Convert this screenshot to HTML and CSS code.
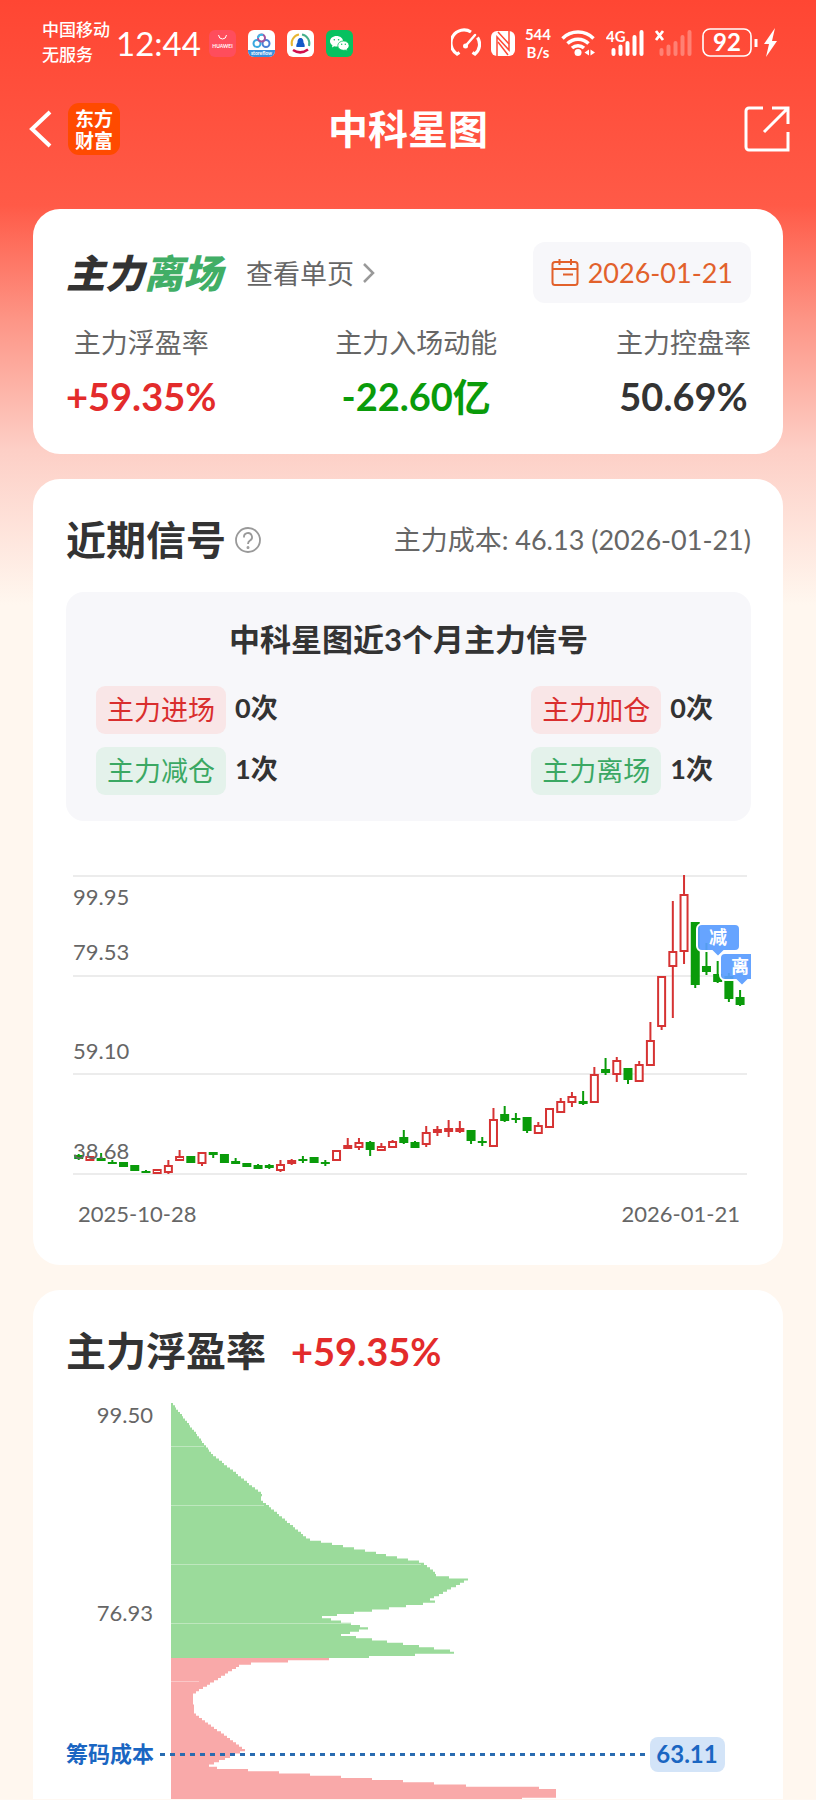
FILE: index.html
```html
<!DOCTYPE html>
<html lang="zh-CN">
<head>
  <meta charset="UTF-8">
  <meta name="viewport" content="width=device-width, initial-scale=1.0">
  <title>中科星图 - 主力信号</title>
  <link rel="stylesheet" href="styles.css">
</head>
<body>
  <div class="statusbar">
    <div class="carrier">中国移动<br>无服务</div>
    <div class="clock">12:44</div>
    <div class="apps">
      <svg viewBox="0 0 27 27"><rect width="27" height="27" rx="6" fill="#ff4d5c"/><path d="M9.500 5q.5 4 4 4t4-4" fill="none" stroke="#fff" stroke-width="1"/><text x="13.500" y="17.500" font-size="5" font-weight="700" text-anchor="middle" fill="#fff">HUAWEI</text></svg>
      <svg viewBox="0 0 27 27"><rect width="27" height="27" rx="6" fill="#fff"/><path d="M0 20h27v1a6 6 0 0 1-6 6H6a6 6 0 0 1-6-6z" fill="#3b8fdc"/><g fill="none" stroke-width="2"><circle cx="9" cy="13.500" r="3.500" stroke="#39a9e0"/><circle cx="18" cy="13.500" r="3.500" stroke="#4a7fd6"/><circle cx="13.500" cy="8" r="3.500" stroke="#a1559f"/><path d="M10 8a3.500 3.500 0 0 1 5-3" stroke="#39b9e8"/></g><text x="13.500" y="25" font-size="5" font-weight="700" text-anchor="middle" fill="#fff">storeflow</text></svg>
      <svg viewBox="0 0 27 27"><rect width="27" height="27" rx="6" fill="#fff"/><g fill="none" stroke-width="2"><path d="M5 16A9 9 0 0 1 12 4.500" stroke="#e8b632"/><path d="M15 4.500A9 9 0 0 1 22 16" stroke="#46b08c"/><path d="M6 20q7.500 5 15-.5" stroke="#d0104c" stroke-width="2.500"/></g><path d="M13.500 8c2.500 0 3 2.500 3 4.500 1.200 1.500 1.500 3.500 1 4.500h-8c-.5-1-.2-3 1-4.500 0-2 .5-4.500 3-4.500z" fill="#1459c8"/></svg>
      <svg viewBox="0 0 27 27"><rect width="27" height="27" rx="6" fill="#07c160"/><path d="M10.500 6c-3.600 0-6.500 2.300-6.500 5.200 0 1.700 1 3.100 2.400 4.100L6 17.500l2.300-1.200c.7.2 1.400.3 2.200.3 3.600 0 6.500-2.400 6.500-5.400S14.100 6 10.500 6z" fill="#fff"/><path d="M17.500 11c-3.200 0-5.700 2-5.700 4.600s2.500 4.700 5.700 4.700c.6 0 1.200-.1 1.800-.2l2 1-.4-1.900c1.400-.9 2.200-2.200 2.200-3.600 0-2.600-2.500-4.600-5.600-4.600z" fill="#fff" stroke="#07c160" stroke-width=".8"/><g fill="#07c160"><circle cx="8.300" cy="9.700" r=".8"/><circle cx="12.600" cy="9.700" r=".8"/><circle cx="15.700" cy="14.300" r=".7"/><circle cx="19.300" cy="14.300" r=".7"/></g></svg>
    </div>
    <div class="indicators">
      <svg width="30" height="30" viewBox="0 0 30 30" fill="none" stroke="#fff" stroke-width="3.200"><path d="M8.500 24.500L6 26A12.500 12.500 0 0 1 20 4M26.500 9.500A12.500 12.500 0 0 1 24 26l-2.500-1.500"/><path d="M24 7l-9.500 11" stroke-width="2.500" stroke-linecap="round"/><circle cx="14.500" cy="18" r="2.500" fill="#fff" stroke="none"/></svg>
      <svg width="24" height="30" viewBox="0 0 24 30"><rect y="3" width="24" height="25" rx="6" fill="#fff"/><path d="M6 28V9l12 13V3" fill="none" stroke="#ff4a36" stroke-width="1.500"/><path d="M7 4l11 12M7 14l10 13" stroke="#ff4a36" stroke-width="1.500"/></svg>
      <div class="speed">544<br>B/s</div>
      <svg width="35" height="30" viewBox="0 0 35 30"><g fill="none" stroke="#fff" stroke-width="3.500"><path d="M1.500 10.500a22 22 0 0 1 31 0"/><path d="M6.500 15.500a15 15 0 0 1 21 0"/><path d="M11 20a9 9 0 0 1 12 0"/></g><circle cx="17" cy="24.500" r="3.500" fill="#fff"/><path d="M28 21.500v6l-4.500-3zM29.500 21.500v6l4.500-3z" fill="#fff"/></svg>
      <svg width="38" height="30" viewBox="0 0 38 30"><text x="0" y="14" font-size="15" font-weight="700" fill="#fff">4G</text><path d="M7.500 22v4M14.500 18.500V26M21.500 15v11M28.500 9v17M35.500 4v22" stroke="#fff" stroke-width="4" stroke-linecap="round"/></svg>
      <svg width="38" height="30" viewBox="0 0 38 30"><path d="M2 3l7 9M9 3l-7 9" stroke="#fff" stroke-width="2.800"/><path d="M7.500 22v4M14.500 18.500V26M21.500 15v11M28.500 9v17M35.500 4v22" stroke="#fff" stroke-opacity=".3" stroke-width="4" stroke-linecap="round"/></svg>
      <svg width="76" height="30" viewBox="0 0 76 30"><rect x="1" y="1" width="48" height="27" rx="7" fill="none" stroke="#fff" stroke-width="1.600"/><text x="25" y="23" font-size="24" font-weight="700" text-anchor="middle" fill="#fff">92</text><path d="M54 11v8" stroke="#fff" stroke-width="3"/><path d="M73 0L62 16h5l-3 13 11-16h-5z" fill="#fff"/></svg>
    </div>
  </div>

  <header class="navbar">
    <div class="nav-left">
      <button class="icon-btn" aria-label="返回"><svg width="26" height="40" viewBox="0 0 26 40" fill="none" stroke="#fff" stroke-width="4"><path d="M24 3L6 20l18 17"/></svg></button>
      <a class="brand" href="#">东方<br>财富</a>
    </div>
    <h1>中科星图</h1>
    <button class="icon-btn share" aria-label="分享"><svg width="46" height="46" viewBox="0 0 46 46" fill="none" stroke="#fff" stroke-width="3"><path d="M19 2H5a3 3 0 0 0-3 3v36a3 3 0 0 0 3 3h39V26"/><path d="M28 2h16v16M44 2L20 26"/></svg></button>
  </header>

  <main>
    <section class="card summary">
      <div class="row">
        <div class="signal"><span>主力</span><span class="exit">离场</span></div>
        <a class="more" href="#">查看单页<svg width="14" height="22" viewBox="0 0 14 22" fill="none" stroke="#999" stroke-width="2.500"><path d="M2 2l9 9-9 9"/></svg></a>
        <button class="date-btn"><svg width="28" height="28" viewBox="0 0 28 28" fill="none" stroke="#e2612b" stroke-width="2"><rect x="1.500" y="3" width="25" height="23" rx="2.500"/><path d="M1.500 10h25M8.500 0v6M20 0v6M12 15.500h10"/></svg>2026-01-21</button>
      </div>
      <div class="stats">
        <div><span class="label">主力浮盈率</span><strong class="up">+59.35%</strong></div>
        <div><span class="label">主力入场动能</span><strong class="down">-22.60亿</strong></div>
        <div><span class="label">主力控盘率</span><strong>50.69%</strong></div>
      </div>
    </section>

    <section class="card">
      <div class="card-head">
        <h2>近期信号</h2>
        <button class="icon-btn" aria-label="说明"><svg width="28" height="28" viewBox="0 0 28 28" fill="none" stroke="#999" stroke-width="1.800"><circle cx="14" cy="14" r="12"/><path d="M10 11.500a4 4 0 1 1 6 3c-1.500 1-2 1.500-2 3.500"/><circle cx="14" cy="21.500" r=".6" fill="#999"/></svg></button>
        <span class="cost">主力成本: 46.13 (2026-01-21)</span>
      </div>
      <div class="panel">
        <h3>中科星图近3个月主力信号</h3>
        <div class="signals">
          <div><span class="tag red">主力进场</span><b>0次</b></div>
          <div><span class="tag red">主力加仓</span><b>0次</b></div>
          <div><span class="tag green">主力减仓</span><b>1次</b></div>
          <div><span class="tag green">主力离场</span><b>1次</b></div>
        </div>
      </div>
      <svg class="kline" viewBox="0 866 685 366">
        <path d="M7 876h674M7 976h674M7 1074h674M7 1174h674" stroke="#ececec" stroke-width="2"/>
        <g id="candles"></g>
        <g class="axis">
          <text x="7" y="905">99.95</text>
          <text x="7" y="960">79.53</text>
          <text x="7" y="1059">59.10</text>
          <text x="7" y="1159">38.68</text>
          <text x="12" y="1222">2025-10-28</text>
          <text x="674" y="1222" text-anchor="end">2026-01-21</text>
        </g>
        <g class="marker">
          <path d="M636 924h33a5 5 0 0 1 5 5v17a5 5 0 0 1-5 5h-11l-6 6-6-6h-10a5 5 0 0 1-5-5v-17a5 5 0 0 1 5-5z"/>
          <text x="652" y="944">减</text>
          <path d="M659 953h37v27h-14l-6 6-6-6h-11a5 5 0 0 1-5-5v-17a5 5 0 0 1 5-5z"/>
          <text x="674" y="973">离</text>
        </g>
      </svg>
    </section>

    <section class="card last">
      <div class="card-head">
        <h2>主力浮盈率</h2>
        <strong class="up">+59.35%</strong>
      </div>
      <svg class="chips" viewBox="0 1400 685 400">
        <path id="chips-up" fill="#9bdb9b"/>
        <path id="chips-down" fill="#f9a9a9"/>
        <path d="M105 1447.500h33M105 1506.500h93M105 1565.500h250M105 1624.500h180M105 1682.500h28" stroke="#fff" stroke-opacity=".35"/>
        <g class="axis">
          <text x="87" y="1424" text-anchor="end">99.50</text>
          <text x="87" y="1622" text-anchor="end">76.93</text>
        </g>
        <path d="M94 1755.500h490" stroke="#2a6bb0" stroke-width="3" stroke-dasharray="5 5"/>
        <g class="cost-line">
          <text x="0" y="1763">筹码成本</text>
          <rect x="584" y="1738" width="75" height="35" rx="8"/>
          <text class="cost-value" x="621" y="1764" text-anchor="middle">63.11</text>
        </g>
      </svg>
    </section>
  </main>

  <script>
    // [涨跌, 实体上沿, 实体下沿, 最高, 最低]
    const candles = [
      [0,1155,1159,1154,1160],[1,1157,1160,1156,1160],[0,1158,1161,1153,1161],[0,1162,1164,1160,1164],
      [0,1162,1167,1162,1167],[0,1165,1171,1165,1171],[0,1171,1173,1170,1173],[1,1170,1173,1169,1173],
      [1,1166,1172,1160,1174],[1,1157,1160,1150,1160],[0,1156,1163,1156,1163],[1,1153,1163,1152,1166],
      [0,1152,1155,1152,1158],[0,1154,1163,1154,1163],[0,1161,1164,1158,1164],[0,1163,1167,1163,1167],
      [0,1165,1169,1164,1169],[0,1165,1168,1164,1169],[1,1165,1170,1160,1172],[1,1161,1163,1159,1165],
      [0,1159,1161,1156,1163],[0,1157,1163,1157,1163],[0,1162,1164,1160,1166],[1,1151,1160,1150,1161],
      [1,1146,1148,1138,1149],[1,1143,1147,1138,1150],[0,1142,1150,1141,1156],[1,1147,1150,1143,1151],
      [1,1142,1147,1140,1148],[0,1137,1143,1130,1144],[0,1142,1148,1141,1148],[1,1133,1144,1126,1147],
      [1,1130,1132,1126,1136],[1,1129,1131,1120,1137],[1,1129,1131,1121,1133],[0,1130,1141,1130,1144],
      [0,1141,1143,1137,1146],[1,1120,1146,1108,1146],[0,1114,1121,1106,1122],[0,1118,1120,1113,1123],
      [0,1117,1131,1117,1133],[1,1126,1133,1122,1134],[1,1109,1127,1108,1127],[1,1102,1112,1098,1113],
      [1,1097,1102,1092,1107],[0,1101,1104,1091,1105],[1,1075,1102,1067,1103],[0,1069,1073,1058,1075],
      [1,1061,1074,1057,1082],[0,1068,1080,1068,1084],[1,1065,1081,1061,1081],[1,1041,1065,1022,1066],
      [1,977,1026,976,1030],[1,952,966,901,1018],[1,895,951,875,964],[0,922,985,922,988],
      [0,966,972,943,975],[0,974,982,961,983],[0,976,999,973,1002],[0,997,1005,990,1006]
    ];
    document.getElementById('candles').innerHTML = candles.map(([up, top, bottom, high, low], i) => {
      const x = 12.7 + i * 11.21;
      const h = bottom - top;
      const wick = `<path d="M${x} ${high}V${top}M${x} ${bottom}V${low}"/>`;
      const body = up
        ? `<rect x="${x - 3.5}" y="${top}" width="7" height="${h}"/>`
        : `<rect x="${x - 4.5}" y="${top}" width="9" height="${h}" stroke="none"/>`;
      return `<g class="${up ? 'rise' : 'fall'}">${wick}${body}</g>`;
    }).join('');

    // 筹码分布 [y, 宽度]
    const chips = [
      [1404,2],[1454,41],[1494,91],[1499,89],[1539,137],[1562,250],[1570,262],[1576,266],[1579,298],
      [1600,258],[1602,266],[1617,150],[1628,198],[1635,170],[1651,283],[1653,283],[1660,137],[1664,71],[1694,22],
      [1713,23],[1750,74],[1767,35],[1787,315],[1788,385],[1797,385],[1798,359],[1801,330]
    ];
    function chipWidth(y) {
      const i = chips.findIndex(p => p[0] >= y);
      if (i < 1) return chips[0][1];
      const [y0, w0] = chips[i - 1];
      const [y1, w1] = chips[i];
      return Math.round(w0 + (w1 - w0) * (y - y0) / (y1 - y0));
    }
    function chipPath(from, to) {
      const step = 2.22;
      let d = `M105 ${from}`;
      for (let y = from; y < to; y += step) {
        d += `H${105 + chipWidth(y)}V${Math.min(y + step, to)}`;
      }
      return d + 'H105Z';
    }
    document.getElementById('chips-up').setAttribute('d', chipPath(1404, 1659));
    document.getElementById('chips-down').setAttribute('d', chipPath(1659, 1800));
  </script>
</body>
</html>
```

FILE: styles.css
```css
* { box-sizing: border-box; }
body { margin: 0; font-family: Lato, "Noto Sans CJK SC", sans-serif; color: #333; background: #fff8f2 linear-gradient(#ff4633 0, #ff5a47 205px, #fd9586 320px, #fdcfc6 450px, #fff7ef 605px) no-repeat; }
h1, h2, h3 { margin: 0; font-weight: 700; }
a { color: inherit; text-decoration: none; }
button { font: inherit; color: inherit; border: none; background: none; padding: 0; cursor: pointer; }
svg { display: block; }

.statusbar { display: flex; align-items: center; height: 86px; padding: 0 38px 0 42px; color: #fff; }
.carrier { padding-bottom: 2px; font-size: 17px; line-height: 25px; font-weight: 500; }
.clock { margin-left: 6px; font-size: 33px; }
.apps { display: flex; gap: 12px; margin-left: 8px; }
.apps svg { width: 27px; height: 27px; }
.indicators { display: flex; align-items: center; gap: 10px; margin-left: auto; }
.speed { font-size: 15px; line-height: 18px; font-weight: 700; text-align: center; }

.navbar { display: grid; grid-template-columns: 1fr auto 1fr; align-items: center; height: 86px; padding: 0 26px; color: #fff; }
.nav-left { display: flex; align-items: center; gap: 16px; }
.brand { width: 52px; height: 52px; padding: 4px 0; border-radius: 11px; background: #ff4a00; font-family: "Noto Sans CJK SC", sans-serif; font-size: 19px; line-height: 22px; font-weight: 700; text-align: center; }
h1 { font-size: 40px; line-height: 52px; }
.share { justify-self: end; }

main { display: flex; flex-direction: column; gap: 25px; padding: 37px 33px 0; }
.card { padding: 33px 32px 33px 33px; border-radius: 27px; background: #fff; }
.card.last { padding-bottom: 0; border-radius: 27px 27px 0 0; }
.up { color: #e32b2b; }
.down { color: #0a9b0a; }

.row { display: flex; align-items: center; height: 61px; }
.signal { font-size: 39px; line-height: 48px; font-weight: 900; font-style: italic; }
.signal .exit { color: #41ae66; }
.more { display: flex; align-items: center; gap: 8px; margin-left: 24px; font-size: 27px; color: #666; }
.date-btn { display: flex; align-items: center; gap: 9px; height: 61px; margin-left: auto; padding: 0 18px; border-radius: 12px; background: #f7f7fa; color: #e2612b; font-size: 27px; }
.stats { display: flex; justify-content: space-between; margin-top: 20px; }
.stats > div { display: flex; flex-direction: column; align-items: center; }
.label { font-size: 27px; line-height: 40px; color: #666; }
.stats strong, .card-head strong { font-size: 38px; line-height: 46px; }
.stats strong { margin-top: 10px; }
.summary { padding-bottom: 35px; }

.card-head { display: flex; align-items: center; height: 56px; }
h2 { font-size: 40px; line-height: 56px; }
.card-head .icon-btn { margin-left: 8px; }
.card-head strong { margin-left: 25px; }
.cost { margin-left: auto; padding-bottom: 4px; font-size: 27px; color: #666; }
.panel { margin-top: 24px; padding: 24px 38px 26px 30px; border-radius: 18px; background: #f7f7fa; }
h3 { padding-left: 8px; font-size: 31px; line-height: 46px; text-align: center; }
.signals { display: grid; grid-template-columns: auto auto; justify-content: space-between; gap: 13px; margin-top: 24px; }
.signals > div { display: flex; align-items: center; gap: 9px; }
.tag { padding: 0 11px; border-radius: 9px; font-size: 27px; line-height: 48px; }
.tag.red { color: #d92e2e; background: #f9e6e7; }
.tag.green { color: #3ba863; background: #e4f2eb; }
.signals b { padding-bottom: 4px; font-size: 27px; line-height: 40px; }

.kline, .chips { width: 100%; }
.kline { margin-top: 45px; }
.axis { font-size: 22px; fill: #666; }
.rise { fill: #fff; stroke: #d63333; stroke-width: 2; }
.fall { fill: #0a9b0a; stroke: #0a9b0a; stroke-width: 2; }
.marker path { fill: #5a9dff; fill-opacity: .93; stroke: #fff; stroke-width: 2; }
.marker text { font-size: 18px; font-weight: 700; text-anchor: middle; fill: #fff; }
.chips { margin-top: 20px; }
.cost-line { font-size: 22px; font-weight: 700; fill: #1a66c2; }
.cost-line rect { fill: #d3e4f8; }
.cost-line .cost-value { font-size: 24px; }
```
